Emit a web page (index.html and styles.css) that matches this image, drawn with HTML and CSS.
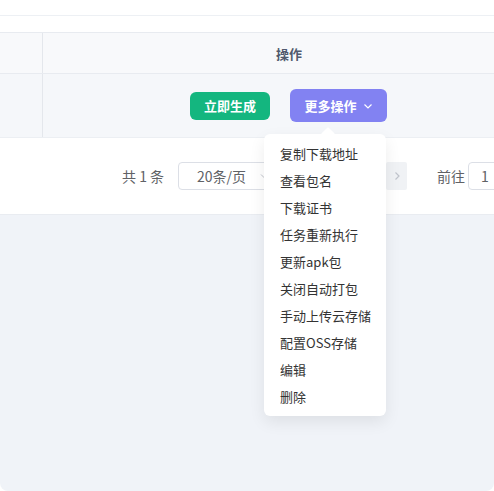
FILE: index.html
```html
<!DOCTYPE html>
<html lang="zh">
<head>
<meta charset="utf-8">
<link rel="stylesheet" href="styles.css">
</head>
<body>
<div class="page">
  <div class="card">
    <div class="strip"></div>
    <div class="gap"></div>
    <div class="table">
      <div class="tr thead">
        <div class="c1"></div>
        <div class="c2">操作</div>
      </div>
      <div class="tr tbody">
        <div class="c1"></div>
        <div class="c2 actions">
          <button class="btn btn-green">立即生成</button>
          <button class="btn btn-purple">更多操作
            <svg class="chev" width="10" height="10" viewBox="0 0 10 10"><path d="M1.5 3.5 L5 7 L8.5 3.5" fill="none" stroke="#fff" stroke-width="1.2"/></svg>
          </button>
        </div>
      </div>
    </div>
    <div class="pager">
      <span class="total">共 1 条</span>
      <div class="select"><span>20条/页</span>
        <svg width="10" height="10" viewBox="0 0 10 10"><path d="M2 3.5 L5 6.5 L8 3.5" fill="none" stroke="#c0c4cc" stroke-width="1"/></svg>
      </div>
      <div class="pbtn">
        <svg width="10" height="10" viewBox="0 0 10 10"><path d="M6.5 1.5 L3 5 L6.5 8.5" fill="none" stroke="#c0c4cc" stroke-width="1.2"/></svg>
      </div>
      <div class="pnum"></div>
      <div class="pbtn next">
        <svg width="10" height="10" viewBox="0 0 10 10"><path d="M3.5 1.5 L7 5 L3.5 8.5" fill="none" stroke="#c0c4cc" stroke-width="1.2"/></svg>
      </div>
      <span class="goto">前往</span>
      <div class="input">1</div>
    </div>
  </div>
  <div class="menu">
    <div class="arrow"></div>
    <div class="item">复制下载地址</div>
    <div class="item">查看包名</div>
    <div class="item">下载证书</div>
    <div class="item">任务重新执行</div>
    <div class="item">更新apk包</div>
    <div class="item">关闭自动打包</div>
    <div class="item">手动上传云存储</div>
    <div class="item">配置OSS存储</div>
    <div class="item">编辑</div>
    <div class="item">删除</div>
  </div>
</div>
</body>
</html>
```
FILE: styles.css
```css
html, body {
  margin: 0;
  padding: 0;
  background: #ffffff;
  font-family: "Noto Sans CJK SC", "Noto Sans", sans-serif;
}
.page {
  position: relative;
  width: 494px;
  height: 491px;
  background: #f0f3f8;
  border-radius: 0 0 8px 8px;
  overflow: hidden;
}
.card {
  background: #ffffff;
}
.strip {
  height: 15px;
  border-bottom: 1px solid #edf0f4;
}
.gap {
  height: 16px;
}
.table {
  border-top: 1px solid #e8ebf0;
  overflow: hidden;
}
.tr {
  display: flex;
  width: 540px;
}
.thead {
  height: 40px;
  background: #f8f9fb;
  border-bottom: 1px solid #e8ebf0;
}
.tbody {
  height: 63px;
  background: #f5f7fa;
  border-bottom: 1px solid #eceff3;
}
.c1 {
  width: 42px;
  border-right: 1px solid #e4e7ec;
  flex: none;
}
.c2 {
  width: 492px;
  flex: none;
  display: flex;
  align-items: center;
  justify-content: center;
}
.thead .c2 {
  font-size: 13px;
  font-weight: 700;
  color: #515a6e;
}
.actions {
  justify-content: flex-start;
  padding-left: 147px;
  gap: 20px;
  box-sizing: border-box;
}
.btn {
  border: none;
  color: #ffffff;
  font-family: inherit;
  font-size: 13px;
  font-weight: 700;
  border-radius: 6px;
  padding: 0;
  display: flex;
  align-items: center;
  justify-content: center;
  flex: none;
}
.btn-green {
  width: 80px;
  height: 28px;
  background: #14b67f;
}
.btn-purple {
  width: 97px;
  height: 33px;
  background: #8282f2;
  gap: 6px;
}
.chev {
  margin-top: 1px;
}
.pager {
  height: 76px;
  display: flex;
  align-items: center;
  padding-left: 122px;
  font-size: 14px;
  color: #606266;
  border-bottom: 1px solid #e9ecf1;
  overflow: hidden;
  white-space: nowrap;
}
.pager > * {
  flex: none;
}
.total {
  margin-right: 14px;
}
.select {
  width: 100px;
  height: 28px;
  box-sizing: border-box;
  border: 1px solid #dcdfe6;
  border-radius: 4px;
  display: flex;
  align-items: center;
  justify-content: space-between;
  padding: 0 8px 0 18px;
  color: #606266;
  font-size: 14px;
}
.pbtn, .pnum {
  width: 30px;
  height: 28px;
  margin-left: 10px;
  background: #f0f2f5;
  border-radius: 2px;
  display: flex;
  align-items: center;
  justify-content: center;
}
.pnum {
  background: #409eff;
}
.next {
  margin-left: 28px;
  width: 21px;
}
.goto {
  margin-left: 30px;
  margin-right: 3px;
}
.input {
  width: 50px;
  height: 28px;
  box-sizing: border-box;
  border: 1px solid #dcdfe6;
  border-radius: 4px;
  display: flex;
  align-items: center;
  padding-left: 12px;
  color: #606266;
}
.menu {
  position: absolute;
  left: 264px;
  top: 134px;
  width: 122px;
  box-sizing: border-box;
  padding: 6px 0;
  background: #ffffff;
  border-radius: 6px;
  box-shadow: 0 6px 16px rgba(0, 0, 0, 0.08);
}
.arrow {
  position: absolute;
  top: -5px;
  left: 59px;
  width: 10px;
  height: 10px;
  background: #ffffff;
  transform: rotate(45deg);
  border-radius: 1px;
}
.item {
  position: relative;
  height: 27px;
  line-height: 27px;
  padding-left: 16px;
  font-size: 13px;
  color: #333333;
  white-space: nowrap;
}
```
